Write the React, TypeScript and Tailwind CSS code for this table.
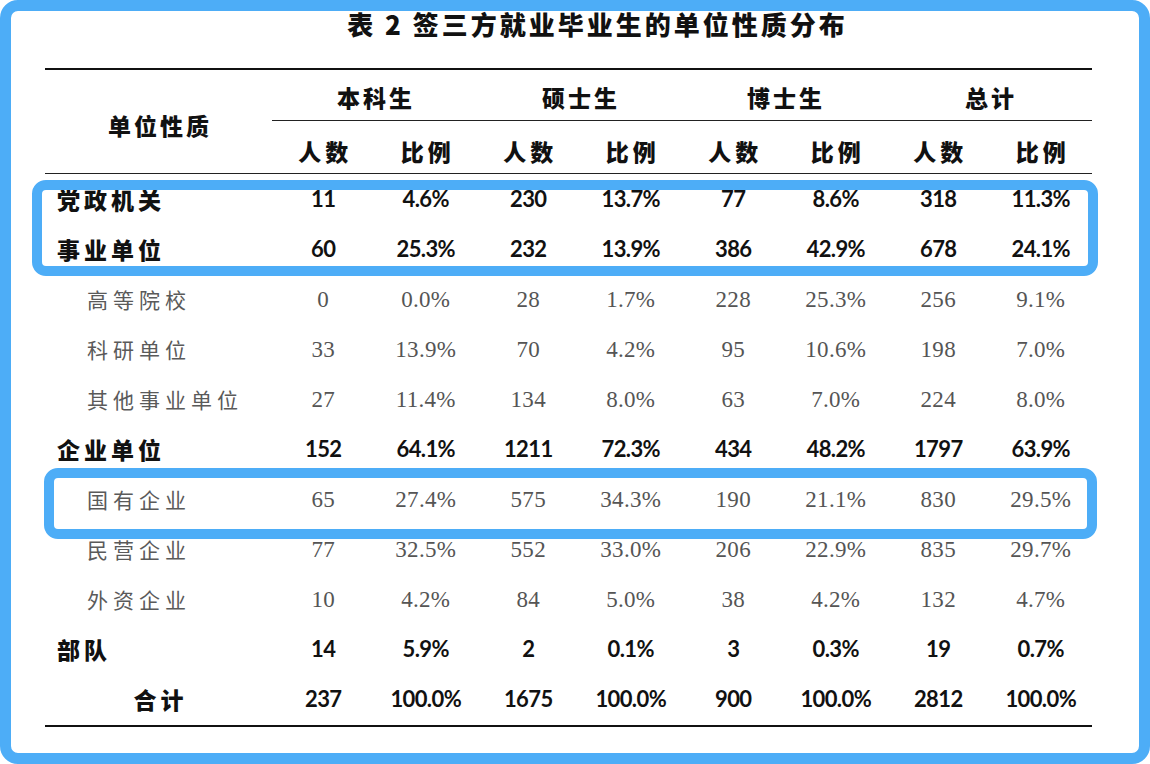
const groups = ["本科生", "硕士生", "博士生", "总计"];

type Row = { label: string; kind: "bold" | "sub" | "total"; v: string[] };

const rows: Row[] = [
  { label: "党政机关", kind: "bold", v: ["11", "4.6%", "230", "13.7%", "77", "8.6%", "318", "11.3%"] },
  { label: "事业单位", kind: "bold", v: ["60", "25.3%", "232", "13.9%", "386", "42.9%", "678", "24.1%"] },
  { label: "高等院校", kind: "sub", v: ["0", "0.0%", "28", "1.7%", "228", "25.3%", "256", "9.1%"] },
  { label: "科研单位", kind: "sub", v: ["33", "13.9%", "70", "4.2%", "95", "10.6%", "198", "7.0%"] },
  { label: "其他事业单位", kind: "sub", v: ["27", "11.4%", "134", "8.0%", "63", "7.0%", "224", "8.0%"] },
  { label: "企业单位", kind: "bold", v: ["152", "64.1%", "1211", "72.3%", "434", "48.2%", "1797", "63.9%"] },
  { label: "国有企业", kind: "sub", v: ["65", "27.4%", "575", "34.3%", "190", "21.1%", "830", "29.5%"] },
  { label: "民营企业", kind: "sub", v: ["77", "32.5%", "552", "33.0%", "206", "22.9%", "835", "29.7%"] },
  { label: "外资企业", kind: "sub", v: ["10", "4.2%", "84", "5.0%", "38", "4.2%", "132", "4.7%"] },
  { label: "部队", kind: "bold", v: ["14", "5.9%", "2", "0.1%", "3", "0.3%", "19", "0.7%"] },
  { label: "合计", kind: "total", v: ["237", "100.0%", "1675", "100.0%", "900", "100.0%", "2812", "100.0%"] },
];

const cjk = "font-['Noto_Sans_CJK_SC',sans-serif]";

function DataRow({ row }: { row: Row }) {
  const light = row.kind === "sub";
  return (
    <div className="grid h-[50px] grid-cols-[227px_repeat(8,minmax(0,1fr))] items-center">
      {row.kind === "bold" && (
        <div className={`${cjk} pl-3 text-[23px] font-black leading-none tracking-[4px] text-[#111]`}>{row.label}</div>
      )}
      {row.kind === "sub" && (
        <div className={`${cjk} pl-[42px] text-[21px] font-normal leading-none tracking-[5px] text-[#5a5a5a]`}>{row.label}</div>
      )}
      {row.kind === "total" && (
        <div className={`${cjk} pl-[4px] text-center text-[23px] font-black leading-none tracking-[4px] text-[#111]`}>{row.label}</div>
      )}
      {row.v.map((val, i) => (
        <div
          key={i}
          className={
            light
              ? "text-center font-['Liberation_Serif',serif] text-[23px] leading-none tracking-[0.3px] text-[#555]"
              : "text-center font-['Lato',sans-serif] text-[22px] font-bold leading-none tracking-[-0.6px] text-[#111]"
          }
        >
          {val}
        </div>
      ))}
    </div>
  );
}

export default function App() {
  return (
    <div className="relative h-[764px] w-[1150px] overflow-hidden rounded-[18px] border-[11px] border-[#4dadf7] bg-white pl-[34px] pr-[47px]">
      <h1 className={`${cjk} h-[26px] pl-[58px] text-center text-[26px] font-black leading-[26px] tracking-[3px] text-[#111]`}>
        表 2 签三方就业毕业生的单位性质分布
      </h1>

      <div className="mt-[31px] border-t-[2.5px] border-[#111]">
        <div className="grid grid-cols-[227px_repeat(8,minmax(0,1fr))] grid-rows-[51px_52px] border-b-[1.5px] border-[#222]">
          <div className={`${cjk} row-span-2 flex items-center justify-center pt-2 pl-[3px] text-[23px] font-black tracking-[3px] text-[#111]`}>
            单位性质
          </div>
          {groups.map((g) => (
            <div
              key={g}
              className={`${cjk} col-span-2 flex items-center justify-center border-b border-[#222] pt-1 pl-[3px] text-[23px] font-black tracking-[3px] text-[#111]`}
            >
              {g}
            </div>
          ))}
          {groups.flatMap((g) =>
            ["人数", "比例"].map((s) => (
              <div
                key={g + s}
                className={`${cjk} flex items-center justify-center pt-2 pl-[4px] text-[23px] font-black tracking-[4px] text-[#111]`}
              >
                {s}
              </div>
            ))
          )}
        </div>

        <div className="border-b-[2px] border-[#111] pb-[1px]">
          {rows.map((r) => (
            <DataRow key={r.label} row={r} />
          ))}
        </div>
      </div>

      {/* highlight boxes */}
      <div className="pointer-events-none absolute left-[21px] top-[169px] h-[96px] w-[1066px] rounded-[14px] border-[10px] border-[#4dadf7]" />
      <div className="pointer-events-none absolute left-[33px] top-[457px] h-[71px] w-[1053px] rounded-[14px] border-[10px] border-[#4dadf7]" />
    </div>
  );
}
